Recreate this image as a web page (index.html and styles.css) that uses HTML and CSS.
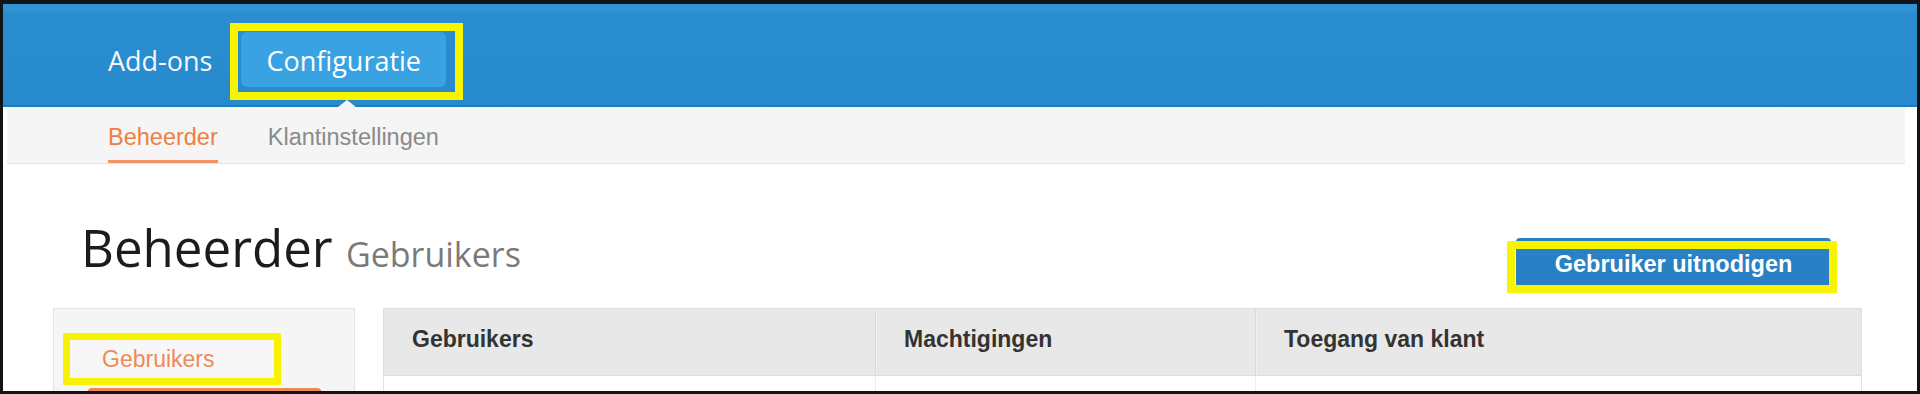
FILE: index.html
```html
<!DOCTYPE html>
<html lang="nl">
<head>
<meta charset="utf-8">
<title>Beheerder - Gebruikers</title>
<link rel="stylesheet" href="styles.css">
</head>
<body>
<div class="frame">
  <div class="page">
    <header class="topbar">
      <nav class="mainnav">
        <a class="mainnav-item">Add-ons</a>
        <a class="mainnav-item is-active">Configuratie</a>
      </nav>
    </header>
    <nav class="subnav">
      <a class="subnav-tab is-active">Beheerder</a>
      <a class="subnav-tab">Klantinstellingen</a>
    </nav>
    <main class="content">
      <div class="title-row">
        <h1 class="page-title">Beheerder <small class="page-subtitle">Gebruikers</small></h1>
        <button class="btn-invite" type="button">Gebruiker uitnodigen</button>
      </div>
      <div class="body-row">
        <aside class="sidebar">
          <a class="side-item">Gebruikers</a>
          <a class="side-item-next"></a>
        </aside>
        <div class="users-table">
          <div class="table-head">
            <div class="th">Gebruikers</div>
            <div class="th">Machtigingen</div>
            <div class="th">Toegang van klant</div>
          </div>
          <div class="table-row">
            <div class="td"></div>
            <div class="td"></div>
            <div class="td"></div>
          </div>
        </div>
      </div>
    </main>
  </div>
</div>
</body>
</html>
```

FILE: styles.css
```css
html, body {
  margin: 0;
  padding: 0;
}

body {
  background: #101418;
  width: 1920px;
  height: 394px;
  overflow: hidden;
}

.frame {
  box-sizing: border-box;
  width: 1920px;
  height: 394px;
  padding: 4px 3px 3px 3px;
}

.page {
  position: relative;
  height: 387px;
  background: #ffffff;
  overflow: hidden;
}

/* ---------- top bar ---------- */
.topbar {
  box-sizing: border-box;
  height: 103px;
  background: linear-gradient(to bottom, #3193d3 0px, #3193d3 6px, #2a8dcf 9px, #278acc 100%);
  border-bottom: 2px solid #1b7cc0;
}

.mainnav {
  display: flex;
  gap: 4px;
  padding: 28px 0 0 80px;
}

.mainnav-item {
  position: relative;
  height: 55px;
  line-height: 57px;
  padding: 0 25px;
  font-family: "Open Sans", "DejaVu Sans", sans-serif;
  font-size: 27px;
  color: #f4f8fc;
  border-radius: 6px;
}

.mainnav-item.is-active {
  background: #39a2e2;
  color: #ffffff;
}

.mainnav-item.is-active::before {
  content: "";
  position: absolute;
  left: -11px;
  right: -17px;
  top: -9px;
  bottom: -13px;
  border: 8px solid #f8f400;
}

.mainnav-item.is-active::after {
  content: "";
  position: absolute;
  left: calc(50% - 6px);
  top: 68px;
  width: 0;
  height: 0;
  border-left: 9px solid transparent;
  border-right: 9px solid transparent;
  border-bottom: 7px solid #f5f5f5;
}

/* ---------- sub navigation ---------- */
.subnav {
  display: flex;
  gap: 50px;
  margin: 0 12px 0 4px;
  padding: 17px 0 0 101px;
  background: #f5f5f5;
  border-bottom: 1px solid #e6e6e6;
}

.subnav-tab {
  font-family: "Liberation Sans", Arial, sans-serif;
  font-size: 23.5px;
  line-height: 26px;
  color: #8a8a8a;
  padding-bottom: 10px;
  border-bottom: 3px solid transparent;
}

.subnav-tab.is-active {
  color: #ec8044;
  border-bottom-color: #f0955f;
}

/* ---------- content ---------- */
.content {
  padding: 0 55px 0 50px;
}

.title-row {
  display: flex;
  align-items: flex-start;
  height: 144px;
  padding: 0 31px 0 28px;
}

.page-title {
  margin: 58px 0 0 0;
  font-family: "Open Sans", "DejaVu Sans", sans-serif;
  font-size: 51px;
  line-height: 51px;
  font-weight: 400;
  color: #1c1c1c;
  white-space: nowrap;
}

.page-subtitle {
  font-size: 34px;
  line-height: 34px;
  color: #7a7a7a;
}

.btn-invite {
  position: relative;
  box-sizing: border-box;
  width: 315px;
  height: 53px;
  margin: 74px 0 0 auto;
  padding: 0;
  border: none;
  border-radius: 4px;
  background: #2a80c4;
  color: #ffffff;
  text-align: center;
  font-family: "Liberation Sans", Arial, sans-serif;
  font-weight: 700;
  font-size: 23.5px;
  line-height: 53px;
}

.btn-invite::after {
  content: "";
  position: absolute;
  left: -9px;
  right: -6px;
  top: 3px;
  bottom: -2px;
  border: 8px solid #f8f400;
}

.body-row {
  display: flex;
  align-items: flex-start;
  gap: 28px;
}

/* ---------- sidebar ---------- */
.sidebar {
  box-sizing: border-box;
  width: 302px;
  height: 120px;
  padding-top: 24px;
  background: #f5f5f5;
  border: 1px solid #e4e4e4;
}

.side-item {
  position: relative;
  display: block;
  box-sizing: border-box;
  width: 218px;
  height: 52px;
  margin-left: 9px;
  padding: 13px 0 13px 39px;
  font-family: "Liberation Sans", Arial, sans-serif;
  font-size: 23px;
  line-height: 26px;
  color: #ee8a57;
  background: #f7f7f7;
}

.side-item::after {
  content: "";
  position: absolute;
  inset: 0;
  border: 7px solid #f8f400;
}

.side-item-next {
  display: block;
  width: 235px;
  height: 30px;
  margin: 3px 0 0 33px;
  background: #ec8a52;
  border-radius: 5px 5px 0 0;
}

/* ---------- table ---------- */
.users-table {
  width: 1479px;
}

.table-head,
.table-row {
  display: grid;
  grid-template-columns: 491px 380px 606px;
}

.table-head {
  background: #e8e8e8;
  border: 1px solid #dddddd;
}

.th {
  padding: 17px 0 23px 28px;
  font-family: "Liberation Sans", Arial, sans-serif;
  font-weight: 700;
  font-size: 23px;
  line-height: 26px;
  color: #333333;
}

.th + .th {
  border-left: 1px solid #dadada;
  box-shadow: inset 1px 0 0 #f0f0f0;
}

.table-row {
  height: 40px;
  border: 1px solid #e2e2e2;
  border-top: none;
  background: #ffffff;
}

.td + .td {
  border-left: 1px solid #ececec;
}
```
